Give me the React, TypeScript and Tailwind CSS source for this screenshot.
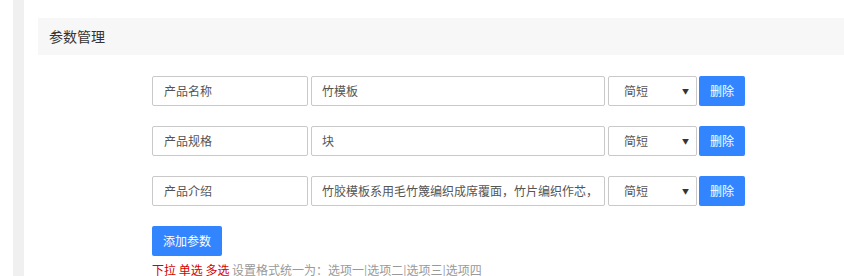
import React from "react";

const font = { fontFamily: '"Noto Sans CJK SC", "Noto Sans", sans-serif' };

function Row({ name, value }: { name: string; value: string }) {
  return (
    <div className="flex items-center h-[30px]">
      <div className="w-[156px] h-[30px] border border-[#c9c9c9] rounded-[2px] pl-[11px] flex items-center text-[12px] text-[#555] bg-white">
        {name}
      </div>
      <div className="ml-[3px] w-[294px] h-[30px] border border-[#c9c9c9] rounded-[2px] pl-[10px] flex items-center text-[12px] text-[#555] bg-white overflow-hidden whitespace-nowrap">
        {value}
      </div>
      <div className="ml-[3px] w-[89px] h-[30px] border border-[#c9c9c9] rounded-[2px] pl-[15px] pr-[7px] flex items-center justify-between text-[12px] text-[#555] bg-white">
        <span>简短</span>
        <span className="text-[7px] text-[#333]">▼</span>
      </div>
      <button className="ml-[2px] w-[46px] h-[30px] rounded-[2px] bg-[#3385ff] text-white text-[12px] flex items-center justify-center">
        删除
      </button>
    </div>
  );
}

export default function App() {
  return (
    <div className="flex w-[844px] h-[276px] bg-white overflow-hidden" style={font}>
      <div className="w-[13px] shrink-0" />
      <div className="w-[11px] shrink-0 bg-[#f0f0f0]" />
      <div className="flex-1 pl-[14px] pt-[18px]">
        <div className="h-[37px] bg-[#f7f7f7] pl-[11px] flex items-center text-[14px] text-[#333]">
          参数管理
        </div>
        <div className="pl-[114px] pt-[21px] flex flex-col gap-[20px]">
          <Row name="产品名称" value="竹模板" />
          <Row name="产品规格" value="块" />
          <Row name="产品介绍" value="竹胶模板系用毛竹篾编织成席覆面，竹片编织作芯，" />
          <div>
            <button className="w-[70px] h-[30px] rounded-[2px] bg-[#3385ff] text-white text-[12px] flex items-center justify-center">
              添加参数
            </button>
            <div className="mt-[4px] text-[12px] leading-[20px] whitespace-nowrap">
              <span className="text-[#d40000]">下拉 单选 多选</span>
              <span className="text-[#999]"> 设置格式统一为：选项一|选项二|选项三|选项四</span>
            </div>
          </div>
        </div>
      </div>
    </div>
  );
}
